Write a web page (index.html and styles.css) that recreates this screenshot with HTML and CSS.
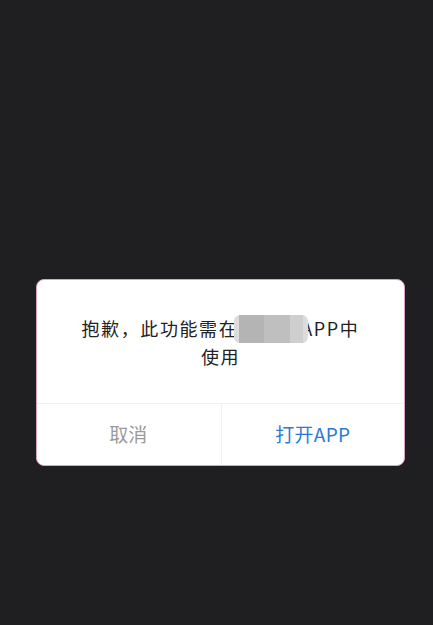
FILE: index.html
```html
<!DOCTYPE html>
<html lang="zh">
<head>
<meta charset="utf-8">
<link rel="stylesheet" href="styles.css">
</head>
<body>
<div class="screen">
  <div class="dialog">
    <div class="message">抱歉，此功能需在<span class="blur"><i class="s1"></i><i class="s2"></i><i class="s3"></i></span>APP中使用</div>
    <div class="actions">
      <div class="btn cancel">取消</div>
      <div class="btn open">打开APP</div>
    </div>
  </div>
</div>
</body>
</html>
```
FILE: styles.css
```css
* { box-sizing: border-box; }
html, body { margin: 0; padding: 0; }
body {
  background: #1f1f21;
  font-family: "Noto Sans CJK SC", "Microsoft YaHei", sans-serif;
}
.screen {
  width: 433px;
  height: 625px;
  padding: 279px 29px 0 36px;
}
.dialog {
  width: 369px;
  height: 187px;
  background: #fff;
  border: 1px solid #d7a3c4;
  border-radius: 8px;
  display: flex;
  flex-direction: column;
}
.message {
  height: 123px;
  padding: 35px 44px 0 44px;
  text-align: center;
  font-size: 18px;
  line-height: 26px;
  letter-spacing: 1.6px;
  color: #222;
}
.blur {
  position: relative;
  z-index: 1;
  display: inline-flex;
  vertical-align: -7px;
  width: 74px;
  height: 28px;
  margin: 0 -7px 0 -4px;
  padding: 0 5px;
  background: #dcdcdc;
  border-radius: 6px;
  overflow: hidden;
}
.blur i { display: block; height: 100%; }
.s1 { flex: 25; background: #b4b4b4; }
.s2 { flex: 26; background: #bfbfbf; }
.s3 { flex: 14; background: #cfcfcf; }
.actions {
  flex: 1;
  display: flex;
  border-top: 1px solid #f2f2f2;
}
.btn {
  flex: 1;
  display: flex;
  align-items: center;
  justify-content: center;
  font-size: 19px;
  padding-bottom: 2px;
}
.cancel {
  color: #9a9a9a;
  border-right: 1px solid #efefef;
  padding-right: 1px;
}
.open { color: #2b7bd2; letter-spacing: 0.3px; }
```
